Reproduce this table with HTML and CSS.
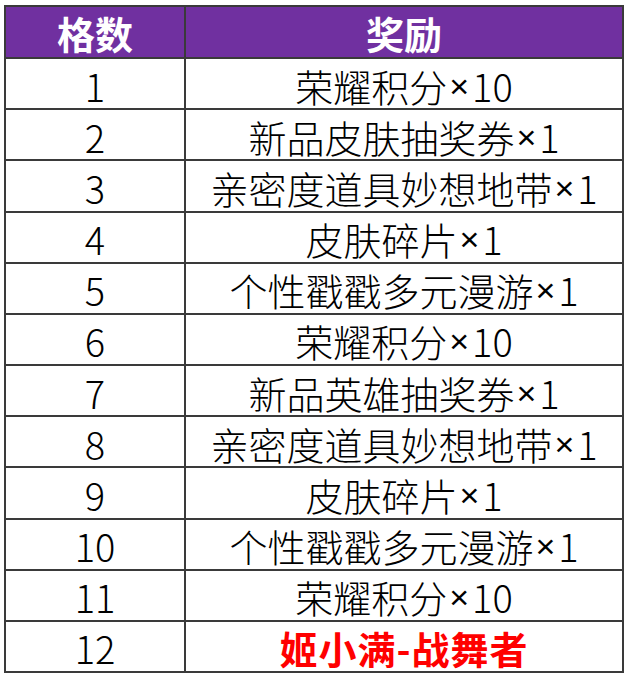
FILE: index.html
```
<!DOCTYPE html>
<html lang="zh-CN">
<head>
<meta charset="utf-8">
<link rel="stylesheet" href="styles.css">
</head>
<body>
<div class="grid">
  <div class="cell head">格数</div><div class="cell head">奖励</div>
  <div class="cell">1</div><div class="cell">荣耀积分<span class="x">×</span>10</div>
  <div class="cell">2</div><div class="cell">新品皮肤抽奖券<span class="x">×</span>1</div>
  <div class="cell">3</div><div class="cell">亲密度道具妙想地带<span class="x">×</span>1</div>
  <div class="cell">4</div><div class="cell">皮肤碎片<span class="x">×</span>1</div>
  <div class="cell">5</div><div class="cell">个性戳戳多元漫游<span class="x">×</span>1</div>
  <div class="cell">6</div><div class="cell">荣耀积分<span class="x">×</span>10</div>
  <div class="cell">7</div><div class="cell">新品英雄抽奖券<span class="x">×</span>1</div>
  <div class="cell">8</div><div class="cell">亲密度道具妙想地带<span class="x">×</span>1</div>
  <div class="cell">9</div><div class="cell">皮肤碎片<span class="x">×</span>1</div>
  <div class="cell">10</div><div class="cell">个性戳戳多元漫游<span class="x">×</span>1</div>
  <div class="cell">11</div><div class="cell">荣耀积分<span class="x">×</span>10</div>
  <div class="cell">12</div><div class="cell red">姬小满-战舞者</div>
</div>
</body>
</html>
```
FILE: styles.css
```
html, body {
  margin: 0;
  padding: 0;
  background: #ffffff;
}
body {
  padding: 5px 0 0 4px;
}
.grid {
  display: grid;
  box-sizing: border-box;
  width: 620px;
  height: 668px;
  padding: 2px;
  gap: 2px;
  background: #3a3a3a;
  grid-template-columns: 178px 1fr;
  grid-template-rows: 50px repeat(12, 1fr);
  font-family: "Noto Sans CJK SC", sans-serif;
  font-size: 38px;
  font-weight: 300;
  color: #000;
}
.cell {
  background: #ffffff;
  display: flex;
  align-items: center;
  justify-content: center;
  line-height: 1;
  padding-top: 4px;
  white-space: pre;
}
.x {
  font-family: "Liberation Sans", sans-serif;
  font-weight: normal;
  font-size: 34px;
  margin: 0 3px 0 2px;
}
.head {
  background: #7030a0;
  color: #ffffff;
  font-weight: bold;
  padding-top: 2px;
}
.red {
  color: #ff0000;
  font-weight: bold;
  letter-spacing: 1px;
}
```
